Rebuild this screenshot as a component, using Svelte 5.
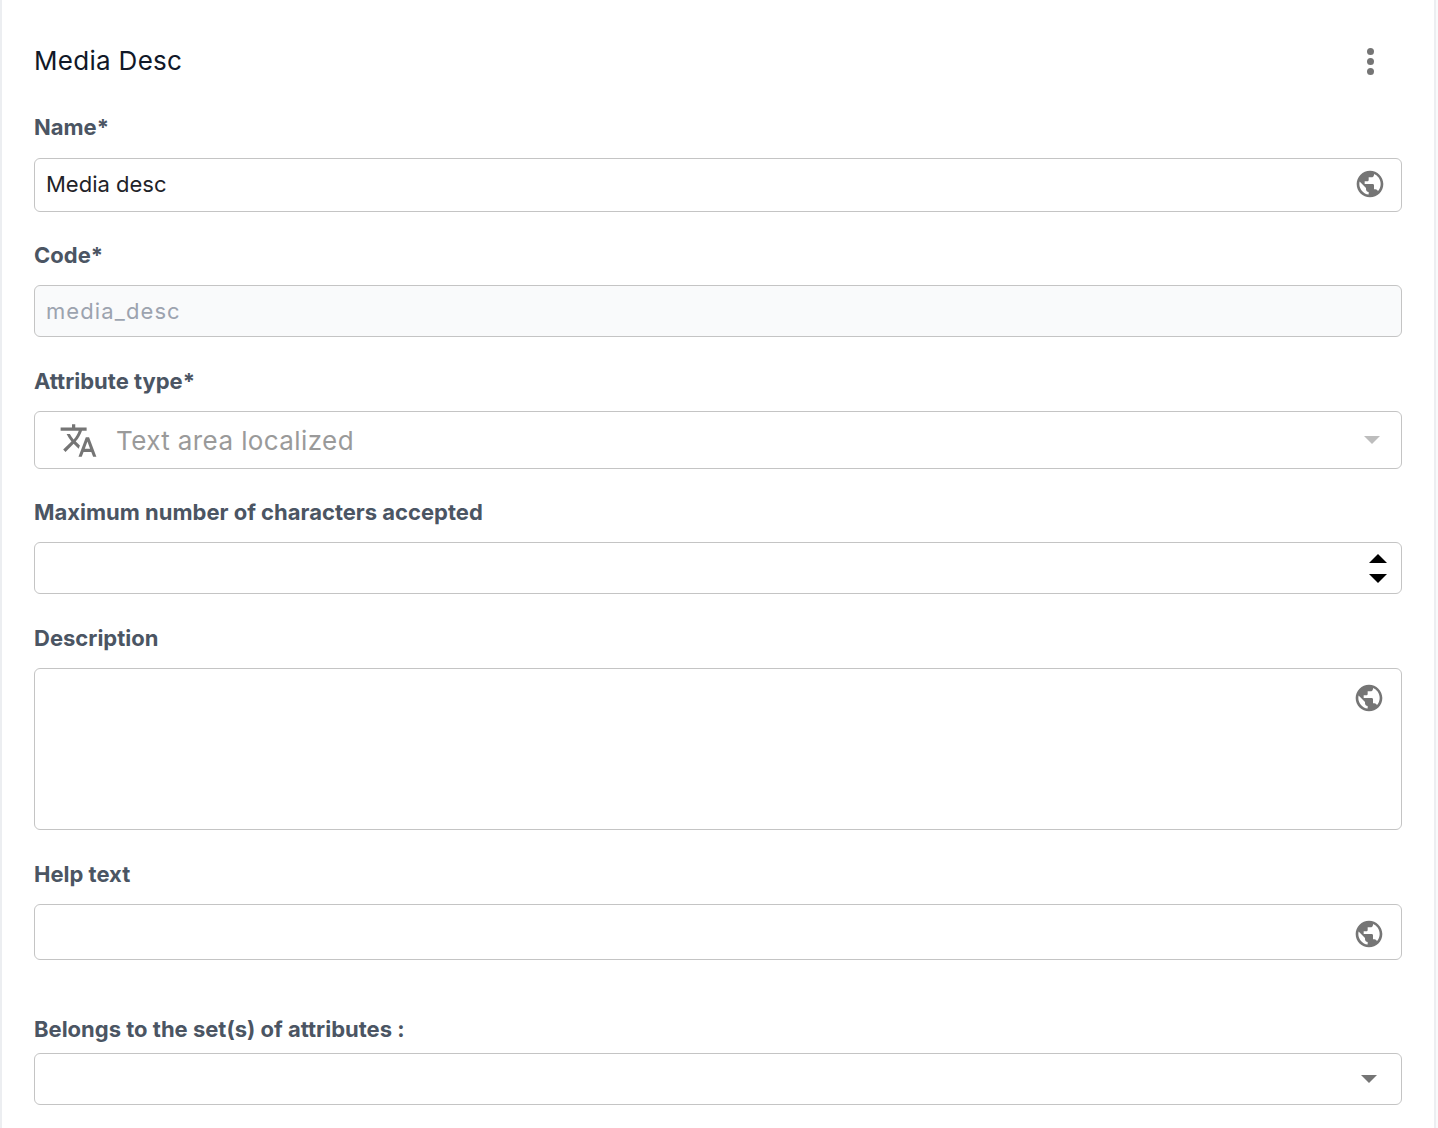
<script>
  const globe = 'M12 2C6.48 2 2 6.48 2 12s4.48 10 10 10 10-4.48 10-10S17.52 2 12 2zm-1 17.93c-3.95-.49-7-3.85-7-7.93 0-.62.08-1.21.21-1.79L9 15v1c0 1.1.9 2 2 2v1.93zm6.9-2.54c-.26-.81-1-1.39-1.9-1.39h-1v-3c0-.55-.45-1-1-1H8v-2h2c.55 0 1-.45 1-1V7h2c1.1 0 2-.9 2-2v-.41c2.93 1.19 5 4.06 5 7.41 0 2.08-.8 3.97-2.1 5.39z';
</script>

<div class="card">
  <header class="head">
    <h2>Media Desc</h2>
    <span class="dots"><i></i><i></i><i></i></span>
  </header>

  <div class="field name">
    <div class="label">Name*</div>
    <div class="control h54">
      <span class="value">Media desc</span>
      <svg class="globe" viewBox="0 0 24 24"><path d={globe} /></svg>
    </div>
  </div>

  <div class="field">
    <div class="label">Code*</div>
    <div class="control h52 disabled">
      <span class="value muted">media_desc</span>
    </div>
  </div>

  <div class="field attr">
    <div class="label">Attribute type*</div>
    <div class="control h58 select-type">
      <svg class="translate" viewBox="0 0 24 24">
        <path d="M12.87 15.07l-2.54-2.51.03-.03c1.74-1.94 2.98-4.17 3.8-6.53H17V4h-7V2H8v2H1v1.99h11.17C11.5 7.92 10.44 9.75 9 11.35 8.07 10.32 7.3 9.19 6.69 8h-2c.73 1.63 1.73 3.17 2.98 4.56l-5.09 5.02L4 19l5-5 3.11 3.11.76-2.04zM18.5 10h-2L12 22h2l1.12-3h4.75L21 22h2l-4.5-12zm-2.62 7l1.62-4.33L19.12 17h-3.24z" />
      </svg>
      <span class="type-text">Text area localized</span>
      <span class="caret light"></span>
    </div>
  </div>

  <div class="field">
    <div class="label">Maximum number of characters accepted</div>
    <div class="control h52">
      <span class="spinner"><i class="up"></i><i class="down"></i></span>
    </div>
  </div>

  <div class="field">
    <div class="label">Description</div>
    <div class="control area">
      <svg class="globe" viewBox="0 0 24 24"><path d={globe} /></svg>
    </div>
  </div>

  <div class="field help">
    <div class="label">Help text</div>
    <div class="control h56">
      <svg class="globe" viewBox="0 0 24 24"><path d={globe} /></svg>
    </div>
  </div>

  <div class="field sets">
    <div class="label">Belongs to the set(s) of attributes :</div>
    <div class="control h52">
      <span class="caret dark"></span>
    </div>
  </div>
</div>

<style>
  :global(body) {
    background: #f9fafb;
  }

  .card {
    box-sizing: border-box;
    width: 1436px;
    height: 1128px;
    overflow: hidden;
    background: #fff;
    border-left: 2px solid #eceef1;
    border-right: 2px solid #eceef1;
    padding: 39px 32px 0;
    font-family: Inter, "Liberation Sans", sans-serif;
  }

  .head {
    display: flex;
    justify-content: space-between;
    align-items: center;
    height: 44px;
    padding-right: 28px;
    margin-bottom: 32px;
  }

  h2 {
    margin: 0;
    padding-bottom: 1px;
    font-size: 26px;
    font-weight: 400;
    letter-spacing: 0.3px;
    color: #111827;
  }

  .dots {
    display: flex;
    flex-direction: column;
    gap: 3px;
  }

  .dots i {
    width: 7px;
    height: 7px;
    border-radius: 50%;
    background: #757575;
  }

  .field {
    margin-bottom: 32px;
  }

  .label {
    height: 24px;
    line-height: 24px;
    margin-bottom: 18px;
    font-size: 22px;
    font-weight: 650;
    color: #4b5563;
  }

  .name {
    margin-bottom: 31px;
  }

  .name .label {
    margin-bottom: 19px;
  }

  .attr {
    margin-bottom: 31px;
  }

  .control {
    box-sizing: border-box;
    display: flex;
    align-items: center;
    justify-content: space-between;
    border: 1px solid #c4c4c4;
    border-radius: 6px;
    padding: 0 11px;
    background: #fff;
  }

  .h52 { height: 52px; }
  .h54 { height: 54px; }
  .h56 { height: 56px; }
  .h58 { height: 58px; }

  .area {
    height: 162px;
    align-items: flex-start;
    justify-content: flex-end;
    padding-top: 13px;
    padding-right: 12px;
  }

  .disabled {
    background: #f9fafb;
  }

  .value {
    padding-bottom: 2px;
    font-size: 22px;
    color: #1f2328;
  }

  .muted {
    padding-bottom: 0;
    letter-spacing: 1.1px;
    color: #9ca3af;
  }

  .globe {
    width: 32px;
    height: 32px;
    margin-left: auto;
    margin-right: 4px;
    fill: #757575;
  }

  .name .globe {
    margin-bottom: 2px;
  }

  .help .control {
    padding-right: 12px;
  }

  .help .globe {
    margin-top: 4px;
  }

  .select-type {
    justify-content: flex-start;
    padding-left: 24px;
    padding-right: 21px;
  }

  .translate {
    width: 39px;
    height: 39px;
    flex: none;
    margin-right: 18px;
    fill: #757575;
  }

  .type-text {
    font-size: 26px;
    letter-spacing: 0.4px;
    color: #9a9a9a;
  }

  .caret {
    margin-left: auto;
    width: 0;
    height: 0;
    border-left: 8px solid transparent;
    border-right: 8px solid transparent;
  }

  .caret.light {
    border-top: 8px solid #bdbdbd;
  }

  .caret.dark {
    margin-right: 13px;
    border-top: 8px solid #757575;
  }

  .spinner {
    margin-left: auto;
    display: flex;
    flex-direction: column;
    gap: 11px;
    margin-right: 3px;
  }

  .spinner i {
    width: 0;
    height: 0;
    border-left: 9px solid transparent;
    border-right: 9px solid transparent;
  }

  .spinner .up {
    border-bottom: 9px solid #000;
  }

  .spinner .down {
    border-top: 9px solid #000;
  }

  .help {
    margin-bottom: 57px;
  }

  .sets .label {
    margin-bottom: 12px;
  }
</style>
